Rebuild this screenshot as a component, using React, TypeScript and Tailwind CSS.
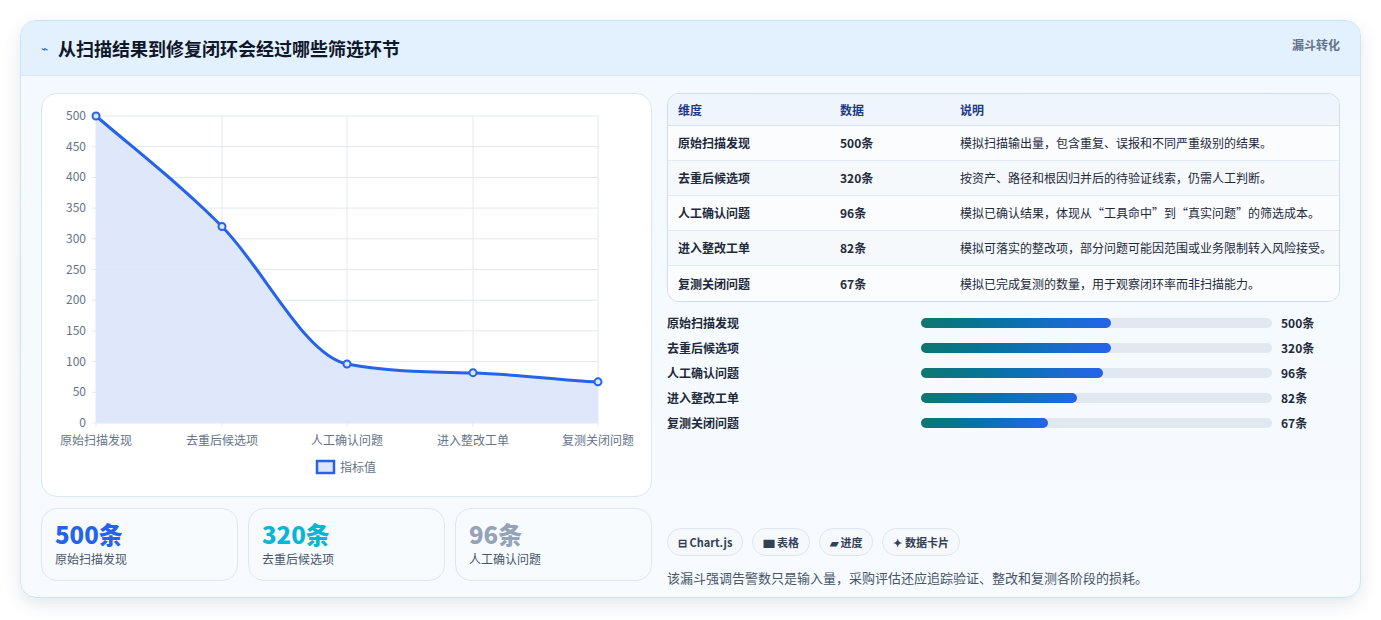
import React from "react";

const rows = [
  ["原始扫描发现", "500条", "模拟扫描输出量，包含重复、误报和不同严重级别的结果。"],
  ["去重后候选项", "320条", "按资产、路径和根因归并后的待验证线索，仍需人工判断。"],
  ["人工确认问题", "96条", "模拟已确认结果，体现从“工具命中”到“真实问题”的筛选成本。"],
  ["进入整改工单", "82条", "模拟可落实的整改项，部分问题可能因范围或业务限制转入风险接受。"],
  ["复测关闭问题", "67条", "模拟已完成复测的数量，用于观察闭环率而非扫描能力。"],
];
const bars = [190, 190, 182, 156, 127];
const xs = [54, 180, 305, 431, 556];
const vals = [500, 320, 96, 82, 67];
const yv = (v: number) => 329 - (v * 307) / 500;

export default function App() {
  return (
    <div className="w-[1381px] h-[620px] bg-white p-5 pb-[22px]" style={{ fontFamily: '"Noto Sans CJK SC", "Noto Sans", sans-serif' }}>
      <div className="h-[578px] rounded-2xl border border-[#cfe3f3] bg-gradient-to-b from-[#f3f9fe] to-[#f7fbff] shadow-[0_6px_18px_rgba(30,60,100,0.12)] overflow-hidden flex flex-col">
        <div className="h-[55px] bg-[#e3f0fd] border-b border-[#d5e6f5] flex items-center justify-between px-5">
          <div className="flex items-center gap-2.5">
            <span className="text-[#2563eb] text-xs">⌁</span>
            <span className="text-[18px] font-bold text-[#0f172a]">从扫描结果到修复闭环会经过哪些筛选环节</span>
          </div>
          <span className="text-xs font-bold text-[#64748b] self-start mt-4">漏斗转化</span>
        </div>
        <div className="flex gap-[15px] px-5 pt-[17px]">
          <div className="w-[611px] flex flex-col gap-[11px]">
            <div className="h-[404px] rounded-2xl border border-[#dbe7f3] bg-white">
              <svg width="611" height="403" className="block">
                {[0, 1, 2, 3, 4, 5, 6, 7, 8, 9, 10].map((i) => {
                  const y = 329 - i * 30.7;
                  return (
                    <g key={i}>
                      <line x1="50" x2="556" y1={y} y2={y} stroke="#e2e8f0" />
                      <text x="44" y={y + 4} textAnchor="end" fontSize="12" fill="#64748b">{i * 50}</text>
                    </g>
                  );
                })}
                {xs.map((x, i) => (
                  <g key={i}>
                    <line x1={x} x2={x} y1="22" y2="333" stroke="#e2e8f0" />
                    <text x={x} y="351" textAnchor="middle" fontSize="12" fill="#64748b">{rows[i][0]}</text>
                  </g>
                ))}
                <path d="M54,22 C96,58 138,90 180,132.5 C222,175 263,262 305,270 C347,278 389,278 431,279 C473,280 514,286 556,288 L556,329 L54,329 Z" fill="#dce6fb" fillOpacity="0.9" />
                <path d="M54,22 C96,58 138,90 180,132.5 C222,175 263,262 305,270 C347,278 389,278 431,279 C473,280 514,286 556,288" fill="none" stroke="#2563eb" strokeWidth="3" />
                {xs.map((x, i) => (
                  <circle key={i} cx={x} cy={yv(vals[i])} r="3.5" fill="#dce6fb" stroke="#2563eb" strokeWidth="2" />
                ))}
                <rect x="275" y="367" width="17" height="12" fill="#dce6fb" stroke="#2563eb" strokeWidth="2.5" />
                <text x="298" y="378" fontSize="12" fill="#64748b">指标值</text>
              </svg>
            </div>
            <div className="grid grid-cols-3 gap-[10px]">
              {[["500条", "text-[#2563eb]", "原始扫描发现"], ["320条", "text-[#06b6d4]", "去重后候选项"], ["96条", "text-[#94a3b8]", "人工确认问题"]].map(([n, c, l]) => (
                <div key={l} className="h-[73px] rounded-2xl border border-[#dbe7f3] bg-[#f8fbfe] px-[13px] pt-[10px]">
                  <div className={`text-[24px] leading-[30px] font-extrabold ${c}`}>{n}</div>
                  <div className="text-xs text-[#475569] mt-0.5">{l}</div>
                </div>
              ))}
            </div>
          </div>
          <div className="flex-1 flex flex-col">
            <div className="rounded-xl border border-[#cfdceb] overflow-hidden bg-[#f8fbfd]">
              <div className="h-[32px] bg-[#eef5fc] border-b border-[#d6e2ee] flex items-center text-xs font-bold text-[#1e3a8a]">
                <div className="w-[172px] pl-[10px]">维度</div>
                <div className="w-[120px]">数据</div>
                <div>说明</div>
              </div>
              {rows.map((r, i) => (
                <div key={i} className={`h-[35px] flex items-center text-xs text-[#1e293b] ${i < 4 ? "border-b border-[#e2eaf2]" : ""} ${i % 2 ? "bg-[#f5f9fc]" : "bg-[#fafcfe]"}`}>
                  <div className="w-[172px] pl-[10px] font-semibold">{r[0]}</div>
                  <div className="w-[120px] font-semibold">{r[1]}</div>
                  <div>{r[2]}</div>
                </div>
              ))}
            </div>
            <div className="flex flex-col gap-[9px] mt-[13px]">
              {rows.map((r, i) => (
                <div key={i} className="flex items-center h-[16px] text-xs text-[#1e293b] font-semibold">
                  <div className="w-[254px]">{r[0]}</div>
                  <div className="w-[351px] h-[10px] rounded-full bg-[#e2e8f0]">
                    <div className="h-full rounded-full bg-gradient-to-r from-[#0f766e] to-[#2563eb]" style={{ width: bars[i] }} />
                  </div>
                  <div className="ml-[9px] font-bold">{r[1]}</div>
                </div>
              ))}
            </div>
            <div className="flex gap-[9px] mt-[97px]">
              {["⊟ Chart.js", "▆ 表格", "▰ 进度", "✦ 数据卡片"].map((t) => (
                <div key={t} className="h-[28px] px-[10px] rounded-full border border-[#dde6ef] bg-[#f6f9fc] text-[11px] font-semibold text-[#334155] flex items-center">{t}</div>
              ))}
            </div>
            <div className="text-[13px] text-[#475569] mt-[12px]">该漏斗强调告警数只是输入量，采购评估还应追踪验证、整改和复测各阶段的损耗。</div>
          </div>
        </div>
      </div>
    </div>
  );
}
